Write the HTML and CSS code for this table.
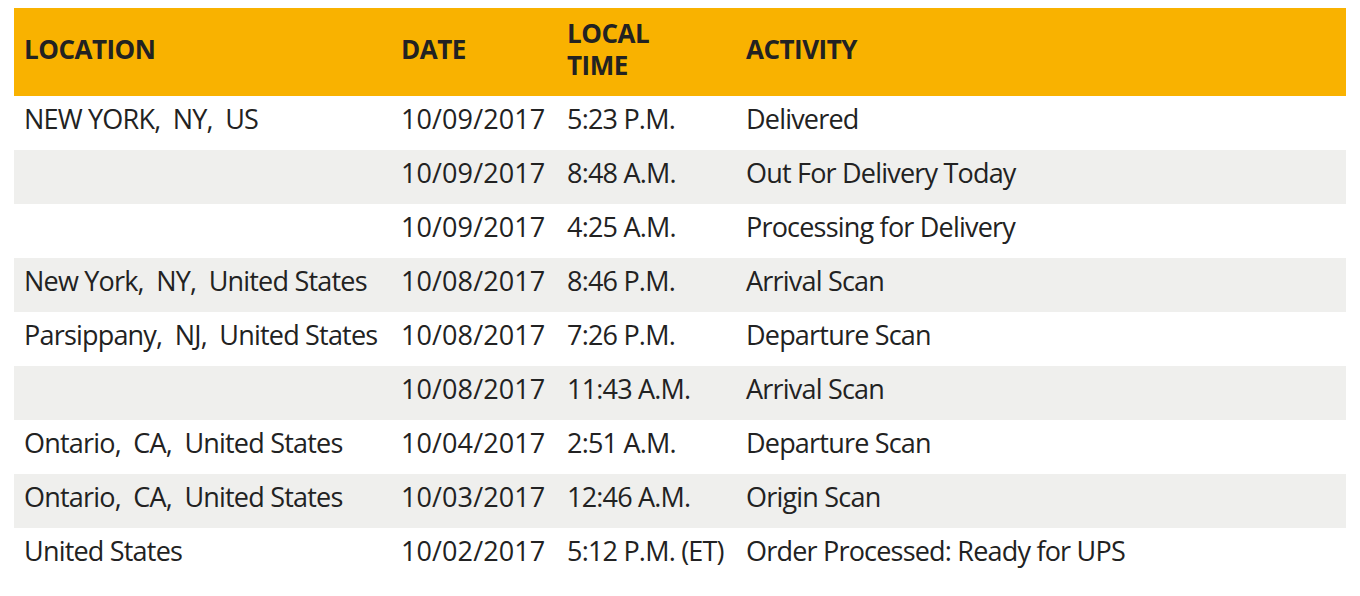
FILE: index.html
```html
<!DOCTYPE html>
<html>
<head>
<meta charset="utf-8">
<link rel="stylesheet" href="styles.css">
</head>
<body>
<table class="track">
  <colgroup>
    <col class="c-loc"><col class="c-date"><col class="c-time"><col class="c-act">
  </colgroup>
  <thead>
    <tr>
      <th>LOCATION</th>
      <th>DATE</th>
      <th><span class="hl">LOCAL</span><span class="hl">TIME</span></th>
      <th>ACTIVITY</th>
    </tr>
  </thead>
  <tbody>
    <tr><td>NEW YORK,&nbsp; NY,&nbsp; US</td><td class="d">10/09/2017</td><td>5:23 P.M.</td><td>Delivered</td></tr>
    <tr><td></td><td class="d">10/09/2017</td><td>8:48 A.M.</td><td>Out For Delivery Today</td></tr>
    <tr><td></td><td class="d">10/09/2017</td><td>4:25 A.M.</td><td>Processing for Delivery</td></tr>
    <tr><td>New York,&nbsp; NY,&nbsp; United States</td><td class="d">10/08/2017</td><td>8:46 P.M.</td><td>Arrival Scan</td></tr>
    <tr><td>Parsippany,&nbsp; NJ,&nbsp; United States</td><td class="d">10/08/2017</td><td>7:26 P.M.</td><td>Departure Scan</td></tr>
    <tr><td></td><td class="d">10/08/2017</td><td>11:43 A.M.</td><td>Arrival Scan</td></tr>
    <tr><td>Ontario,&nbsp; CA,&nbsp; United States</td><td class="d">10/04/2017</td><td>2:51 A.M.</td><td>Departure Scan</td></tr>
    <tr><td>Ontario,&nbsp; CA,&nbsp; United States</td><td class="d">10/03/2017</td><td>12:46 A.M.</td><td>Origin Scan</td></tr>
    <tr><td>United States</td><td class="d">10/02/2017</td><td>5:12 P.M. (ET)</td><td>Order Processed: Ready for UPS</td></tr>
  </tbody>
</table>
</body>
</html>
```
FILE: styles.css
```css
body {
  margin: 8px 14px;
  background: #fff;
  font-family: "Open Sans", "Liberation Sans", sans-serif;
  color: #222;
}
.track {
  width: 1332px;
  border-collapse: collapse;
  table-layout: fixed;
}
.c-loc { width: 377px; }
.c-date { width: 166px; }
.c-time { width: 179px; }
.c-act { width: auto; }
.track th {
  background: #f9b200;
  height: 82px;
  padding: 0 10px 6px;
  text-align: left;
  font-weight: 700;
  font-size: 26px;
  line-height: 32px;
  color: #222;
  letter-spacing: -0.5px;
}
.hl {
  display: block;
  line-height: 32px;
}
.track td {
  height: 46px;
  padding: 0 10px 8px;
  font-size: 27px;
  line-height: 30px;
  white-space: nowrap;
  letter-spacing: -0.8px;
}
.track td.d {
  letter-spacing: 0.1px;
}
.track tbody tr:nth-child(even) td {
  background: #efefed;
}
```
